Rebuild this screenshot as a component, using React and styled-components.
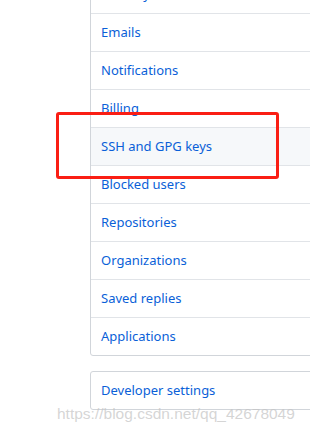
import React from "react";
import styled, { createGlobalStyle } from "styled-components";

const Global = createGlobalStyle`
  html, body { margin: 0; padding: 0; background: #fff; overflow: hidden; }
  body { font-family: "Noto Sans", "Open Sans", Arial, sans-serif; }
`;

const Page = styled.div`
  position: relative;
  width: 310px;
  height: 432px;
  overflow: hidden;
  background: #fff;
`;

const Column = styled.div`
  display: flex;
  flex-direction: column;
  gap: 15px;
  margin-top: -25px;
  padding-left: 90px;
  width: 260px;
`;

const Menu = styled.nav`
  display: flex;
  flex-direction: column;
  border: 1px solid #d1d5da;
  border-radius: 3px;
  background: #fff;
`;

const Item = styled.a`
  display: block;
  box-sizing: border-box;
  padding: 0 10px;
  line-height: 37px;
  font-size: 13px;
  color: #0a5fd8;
  text-decoration: none;
  background: ${(p) => (p.$selected ? "#f6f8fa" : "transparent")};
  border-top: ${(p) => (p.$first ? "none" : "1px solid #e1e4e8")};
  height: ${(p) => (p.$first ? "37px" : "38px")};
`;

const Highlight = styled.div`
  position: absolute;
  left: 56px;
  top: 112px;
  width: 217px;
  height: 61px;
  border: 3px solid #fa1e14;
  border-radius: 3px;
  pointer-events: none;
`;

const Watermark = styled.div`
  position: absolute;
  left: 57px;
  top: 405px;
  font-family: "Liberation Sans", Arial, sans-serif;
  font-size: 15.5px;
  color: rgba(195, 195, 195, 0.7);
  pointer-events: none;
`;

const items = [
  "Security",
  "Emails",
  "Notifications",
  "Billing",
  "SSH and GPG keys",
  "Blocked users",
  "Repositories",
  "Organizations",
  "Saved replies",
  "Applications",
];

export default function App() {
  return (
    <Page>
      <Global />
      <Column>
        <Menu>
          {items.map((t, i) => (
            <Item key={t} $first={i === 0} $selected={t === "SSH and GPG keys"}>
              {t}
            </Item>
          ))}
        </Menu>
        <Menu>
          <Item $first>Developer settings</Item>
        </Menu>
      </Column>
      <Highlight />
      <Watermark>https://blog.csdn.net/qq_42678049</Watermark>
    </Page>
  );
}
